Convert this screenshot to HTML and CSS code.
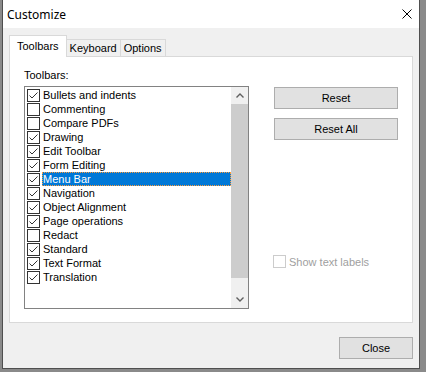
FILE: index.html
```
<!DOCTYPE html>
<html lang="en">
<head>
    <meta charset="UTF-8">
    <title>Customize</title>
    <link rel="stylesheet" href="styles.css">
</head>
<body>
    <div class="window">
        <div class="titlebar">
            <span class="title">Customize</span>
            <svg class="close-x" width="10" height="10" viewBox="0 0 10 10">
                <path d="M0.5 0.5 L9.5 9.5 M9.5 0.5 L0.5 9.5" stroke="#000" stroke-width="1" fill="none"/>
            </svg>
        </div>

        <div class="content">
            <div class="tabs">
                <div class="tab active">Toolbars</div>
                <div class="tab">Keyboard</div>
                <div class="tab">Options</div>
            </div>

            <div class="panel">
                <div class="label">Toolbars:</div>
                <div class="panel-row">
                    <div class="listbox">
                        <ul class="items">
                            <li><span class="box checked"></span><span class="name">Bullets and indents</span></li>
                            <li><span class="box"></span><span class="name">Commenting</span></li>
                            <li><span class="box"></span><span class="name">Compare PDFs</span></li>
                            <li><span class="box checked"></span><span class="name">Drawing</span></li>
                            <li><span class="box checked"></span><span class="name">Edit Toolbar</span></li>
                            <li><span class="box checked"></span><span class="name">Form Editing</span></li>
                            <li class="selected"><span class="box checked"></span><span class="name">Menu Bar</span></li>
                            <li><span class="box checked"></span><span class="name">Navigation</span></li>
                            <li><span class="box checked"></span><span class="name">Object Alignment</span></li>
                            <li><span class="box checked"></span><span class="name">Page operations</span></li>
                            <li><span class="box"></span><span class="name">Redact</span></li>
                            <li><span class="box checked"></span><span class="name">Standard</span></li>
                            <li><span class="box checked"></span><span class="name">Text Format</span></li>
                            <li><span class="box checked"></span><span class="name">Translation</span></li>
                        </ul>
                        <div class="scrollbar">
                            <div class="arrow">
                                <svg width="8" height="5" viewBox="0 0 8 5"><path d="M0.5 4.5 L4 1 L7.5 4.5" stroke="#606060" stroke-width="1.4" fill="none"/></svg>
                            </div>
                            <div class="track"><div class="thumb"></div></div>
                            <div class="arrow">
                                <svg width="8" height="5" viewBox="0 0 8 5"><path d="M0.5 0.5 L4 4 L7.5 0.5" stroke="#606060" stroke-width="1.4" fill="none"/></svg>
                            </div>
                        </div>
                    </div>

                    <div class="side">
                        <button class="btn">Reset</button>
                        <button class="btn">Reset All</button>
                        <label class="option disabled"><span class="box"></span>Show text labels</label>
                    </div>
                </div>
            </div>

            <div class="footer">
                <button class="btn close">Close</button>
            </div>
        </div>
    </div>
</body>
</html>
```

FILE: styles.css
```
body {
    margin: 0;
    background: #8a8a8a;
    font-family: "Liberation Sans", Arial, sans-serif;
    font-size: 11px;
    color: #000;
}

.window {
    margin-left: 2px;
    width: 416px;
    height: 368px;
    background: #f0f0f0;
    border: 1px solid #4f4f4f;
    border-top: none;
}

.titlebar {
    height: 28px;
    background: #fff;
    display: flex;
    align-items: center;
    justify-content: space-between;
    padding: 0 7px 0 4px;
}

.title {
    font-family: "Noto Sans", sans-serif;
    font-size: 12px;
}

.content {
    padding: 7px 6px 0 6px;
}

/* tabs */
.tabs {
    display: flex;
    align-items: flex-end;
    height: 21px;
}

.tab {
    height: 17px;
    line-height: 16px;
    padding: 0 3px;
    border: 1px solid #d9d9d9;
    border-bottom: none;
    border-left: none;
    box-sizing: border-box;
    background: #f0f0f0;
}

.tab.active {
    height: 22px;
    line-height: 20px;
    padding: 0 7px;
    margin-bottom: -1px;
    border-left: 1px solid #d9d9d9;
    background: #fff;
    position: relative;
    z-index: 1;
}

.panel {
    height: 267px;
    box-sizing: border-box;
    background: #fff;
    border: 1px solid #d9d9d9;
    padding: 12px 0 0 14px;
}

.label {
    line-height: 13px;
    margin-bottom: 4px;
}

.panel-row {
    display: flex;
}

/* list box */
.listbox {
    width: 225px;
    height: 223px;
    box-sizing: border-box;
    border: 1px solid #828282;
    display: flex;
}

.items {
    list-style: none;
    margin: 0;
    padding: 1px 0 0 2px;
    flex: 1;
}

.items li {
    display: flex;
    align-items: center;
    height: 14px;
}

.box {
    width: 13px;
    height: 13px;
    box-sizing: border-box;
    border: 1px solid #333;
    background: #fff;
    flex: none;
}

.box.checked {
    background: #fff url("data:image/svg+xml,%3Csvg xmlns='http://www.w3.org/2000/svg' width='11' height='11'%3E%3Cpath d='M1.5 5.5 L4 8 L9.5 2.5' stroke='%23333' stroke-width='1' fill='none'/%3E%3C/svg%3E") no-repeat center;
}

.name {
    flex: 1;
    margin-left: 2px;
    padding-left: 1px;
    height: 14px;
    line-height: 14px;
    box-sizing: border-box;
    white-space: nowrap;
}

.selected .name {
    background: #0078d7;
    color: #fff;
    border: 1px dotted #ff9c3a;
    line-height: 12px;
    padding-left: 0;
}

.scrollbar {
    width: 17px;
    background: #f0f0f0;
    display: flex;
    flex-direction: column;
}

.arrow {
    height: 17px;
    display: flex;
    align-items: center;
    justify-content: center;
}

.track {
    flex: 1;
    padding-bottom: 13px;
}

.thumb {
    height: 100%;
    background: #cdcdcd;
}

/* right column */
.side {
    margin-left: 25px;
    width: 124px;
    display: flex;
    flex-direction: column;
    gap: 9px;
    padding-top: 1px;
}

.btn {
    height: 22px;
    background: #e1e1e1;
    border: 1px solid #adadad;
    font-family: "Liberation Sans", Arial, sans-serif;
    font-size: 11px;
    color: #000;
    padding: 0;
}

.option {
    margin-top: auto;
    margin-bottom: 41px;
    margin-left: -1px;
    display: flex;
    align-items: center;
    gap: 3px;
}

.option.disabled {
    color: #a0a0a0;
}

.option.disabled .box {
    border-color: #cccccc;
}

.footer {
    display: flex;
    justify-content: flex-end;
    padding-top: 14px;
}

.btn.close {
    width: 74px;
}
```
